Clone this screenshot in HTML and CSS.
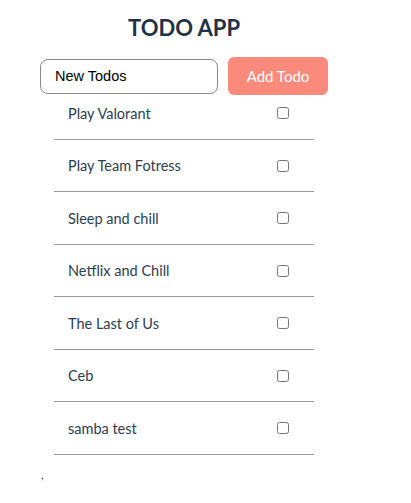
FILE: index.html
```html
<!DOCTYPE html>
<html>
<head>
<meta charset="utf-8">
<link rel="stylesheet" href="styles.css">
</head>
<body>
<div class="app">
  <h1 class="title">TODO APP</h1>
  <form class="form">
    <input class="input" type="text" value="New Todos">
    <button class="add" type="button">Add Todo</button>
  </form>
  <ul class="list">
    <li class="item"><span class="label">Play Valorant</span><input class="check" type="checkbox"></li>
    <li class="item"><span class="label">Play Team Fotress</span><input class="check" type="checkbox"></li>
    <li class="item"><span class="label">Sleep and chill</span><input class="check" type="checkbox"></li>
    <li class="item"><span class="label">Netflix and Chill</span><input class="check" type="checkbox"></li>
    <li class="item"><span class="label">The Last of Us</span><input class="check" type="checkbox"></li>
    <li class="item"><span class="label">Ceb</span><input class="check" type="checkbox"></li>
    <li class="item"><span class="label">samba test</span><input class="check" type="checkbox"></li>
  </ul>
  <div class="stray">,</div>
</div>
</body>
</html>
```

FILE: styles.css
```css
html, body {
  margin: 0;
  padding: 0;
  background: #ffffff;
}
body {
  font-family: Lato, "Open Sans", sans-serif;
  color: #2c3e50;
}
.app {
  width: 368px;
}
.title {
  margin: 0;
  padding-top: 14px;
  height: 28px;
  line-height: 28px;
  text-align: center;
  font-size: 22px;
  font-weight: 700;
  color: #1f3247;
}
.form {
  display: flex;
  align-items: center;
  gap: 10px;
  margin: 15px 0 0 40px;
  height: 38px;
}
.input {
  box-sizing: border-box;
  width: 178px;
  height: 35px;
  border: 1px solid #8a8a8a;
  border-radius: 8px;
  padding: 0 14px;
  font-family: "Liberation Sans", Arial, sans-serif;
  font-size: 14.5px;
  color: #000;
  outline: none;
}
.add {
  box-sizing: border-box;
  width: 100px;
  height: 38px;
  border: none;
  border-radius: 6px;
  background: #fa8a7b;
  color: #ffffff;
  font-family: Lato, sans-serif;
  font-size: 15px;
  padding: 0;
}
.list {
  list-style: none;
  margin: -8px 0 0 54px;
  padding: 0;
  width: 260px;
}
.item {
  box-sizing: border-box;
  height: 52.5px;
  border-bottom: 1px solid #999999;
  display: flex;
  align-items: center;
  justify-content: space-between;
  padding: 1px 25px 0 14px;
  font-size: 14.5px;
}
.check {
  margin: 0;
  width: 12px;
  height: 12px;
}
.stray {
  margin: 13px 0 0 41px;
  font-size: 12px;
  line-height: 14px;
}
```
